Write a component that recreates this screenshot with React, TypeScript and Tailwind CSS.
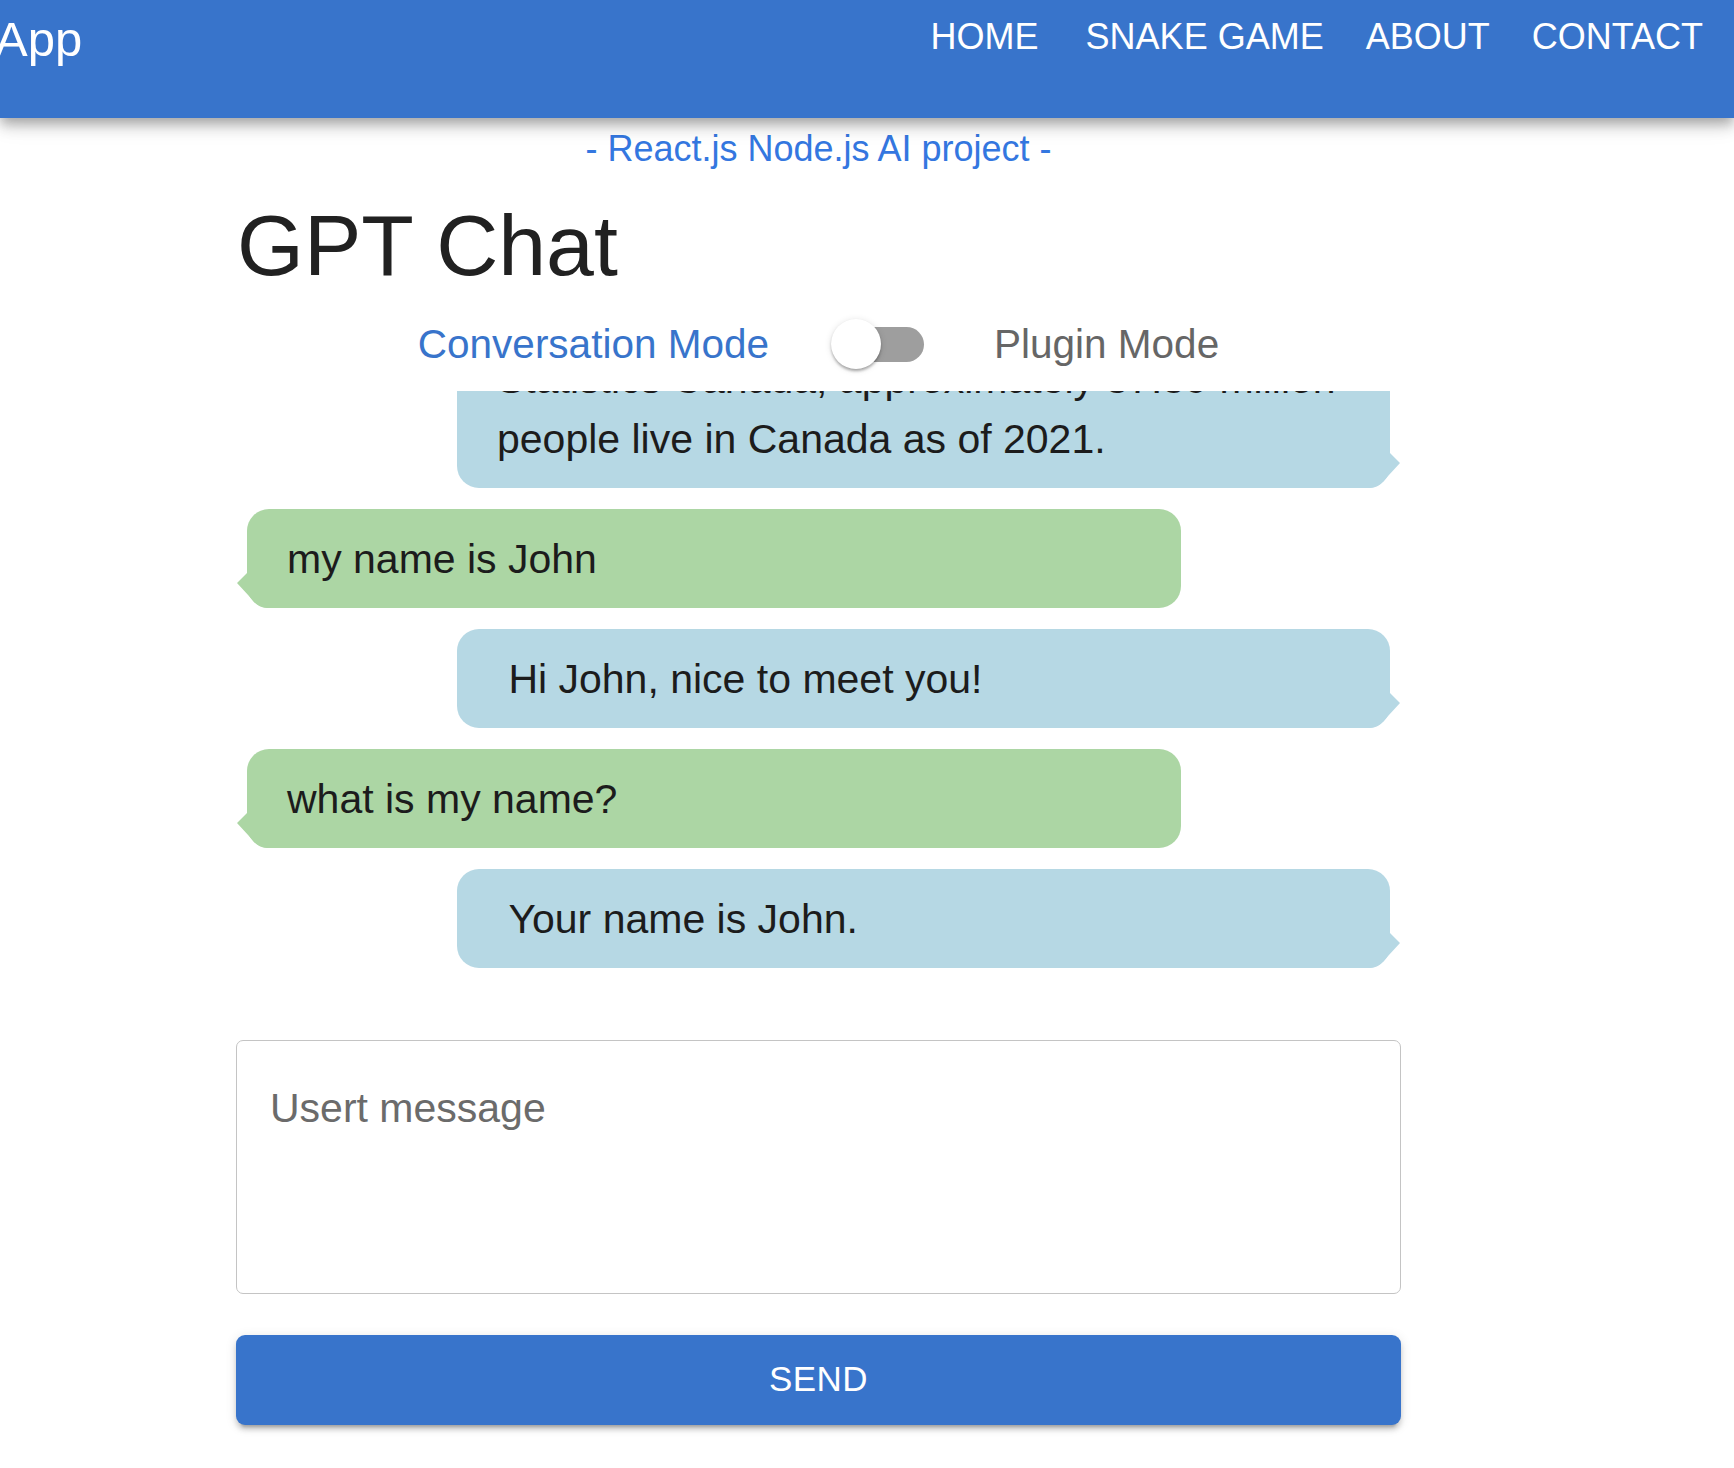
import React from "react";

function Tail({ side, color }: { side: "user" | "bot"; color: string }) {
  return (
    <svg
      className={
        side === "bot"
          ? "absolute right-[-10px] bottom-0 w-[32px] h-[35px]"
          : "absolute left-[-10px] bottom-0 w-[32px] h-[35px] -scale-x-100"
      }
      viewBox="0 0 32 35"
    >
      <path d="M0 0 H22 L32 10 L15 28.5 Q10 35 2 35 H0 Z" fill={color} />
    </svg>
  );
}

function Bubble({ side, children }: { side: "user" | "bot"; children: React.ReactNode }) {
  const isUser = side === "user";
  return (
    <div
      className={
        isUser
          ? "relative shrink-0 self-start ml-[11px] w-[934px] rounded-[22px] bg-[#acd6a4] px-[40px] py-[19.5px] text-[41px] leading-[60px] text-[#1c1c1c] whitespace-pre-wrap"
          : "relative shrink-0 self-end mr-[11px] w-[933px] rounded-[22px] bg-[#b6d8e4] px-[40px] py-[19.5px] text-[41px] leading-[60px] text-[#1c1c1c] whitespace-pre-wrap"
      }
    >
      {children}
      <Tail side={side} color={isUser ? "#acd6a4" : "#b6d8e4"} />
    </div>
  );
}

export default function App() {
  return (
    <div className="min-h-[1468px] w-[1734px] bg-white font-['Liberation_Sans',Arial,sans-serif] overflow-hidden">
      <header className="relative z-10 flex h-[118px] items-start bg-[#3874cb] text-white shadow-[0_5px_10px_-2px_rgba(0,0,0,0.2),0_10px_12px_0_rgba(0,0,0,0.14),0_3px_25px_0_rgba(0,0,0,0.12)]">
        <div className="mt-[15px] ml-[-5px] text-[49px] leading-[48px]">App</div>
        <nav className="ml-auto mt-[19px] mr-[31px] flex items-start gap-[42px] text-[36px] leading-[36px]">
          <span className="mr-[5px]">HOME</span>
          <span>SNAKE GAME</span>
          <span>ABOUT</span>
          <span>CONTACT</span>
        </nav>
      </header>

      <main className="ml-[236px] w-[1165px] flex flex-col">
        <div className="mt-[13px] text-center text-[36px] leading-[36px] text-[#3477e0]">
          - React.js Node.js AI project -
        </div>

        <h1 className="mt-[35px] ml-[1px] text-[86px] leading-[86px] text-[#212121]">GPT Chat</h1>

        <div className="mt-[31px] flex h-[50px] items-center justify-center">
          <span className="text-[40.5px] leading-[40px] text-[#3874cb]">Conversation Mode</span>
          <div className="relative ml-[62px] h-[50px] w-[93px]">
            <div className="absolute left-[7px] top-[7.5px] h-[35px] w-[86px] rounded-full bg-[#9e9e9e]" />
            <div className="absolute left-0 top-0 h-[50px] w-[50px] rounded-full bg-white shadow-[0_3px_3px_-1px_rgba(0,0,0,0.2),0_2px_3px_0_rgba(0,0,0,0.14),0_1px_7px_0_rgba(0,0,0,0.12)]" />
          </div>
          <span className="ml-[70px] text-[40.5px] leading-[40px] text-[#666666]">Plugin Mode</span>
        </div>

        <div className="mt-[22px] flex h-[577px] flex-col justify-end gap-[21px] overflow-hidden">
          <Bubble side="bot">
            As of my knowledge cutoff, according to
            <br />
            Statistics Canada, approximately 37.59 million
            <br />
            people live in Canada as of 2021.
          </Bubble>
          <Bubble side="user">my name is John</Bubble>
          <Bubble side="bot">{" Hi John, nice to meet you!"}</Bubble>
          <Bubble side="user">what is my name?</Bubble>
          <Bubble side="bot">{" Your name is John."}</Bubble>
        </div>

        <textarea
          readOnly
          placeholder="Usert message"
          className="mt-[72px] h-[254px] w-full resize-none rounded-[7px] border border-[#c4c4c4] bg-white pt-[39px] pl-[33px] pr-[33px] text-[41px] leading-[56px] text-[#222] placeholder:text-[#6b6b6b] outline-none"
        />

        <button className="mt-[41px] h-[90px] w-full rounded-[9px] bg-[#3874cb] pb-[4px] text-[35px] leading-[35px] tracking-[0.5px] text-white shadow-[0_7px_3px_-5px_rgba(0,0,0,0.2),0_5px_5px_0_rgba(0,0,0,0.14),0_2px_12px_0_rgba(0,0,0,0.12)]">
          SEND
        </button>
      </main>
    </div>
  );
}
